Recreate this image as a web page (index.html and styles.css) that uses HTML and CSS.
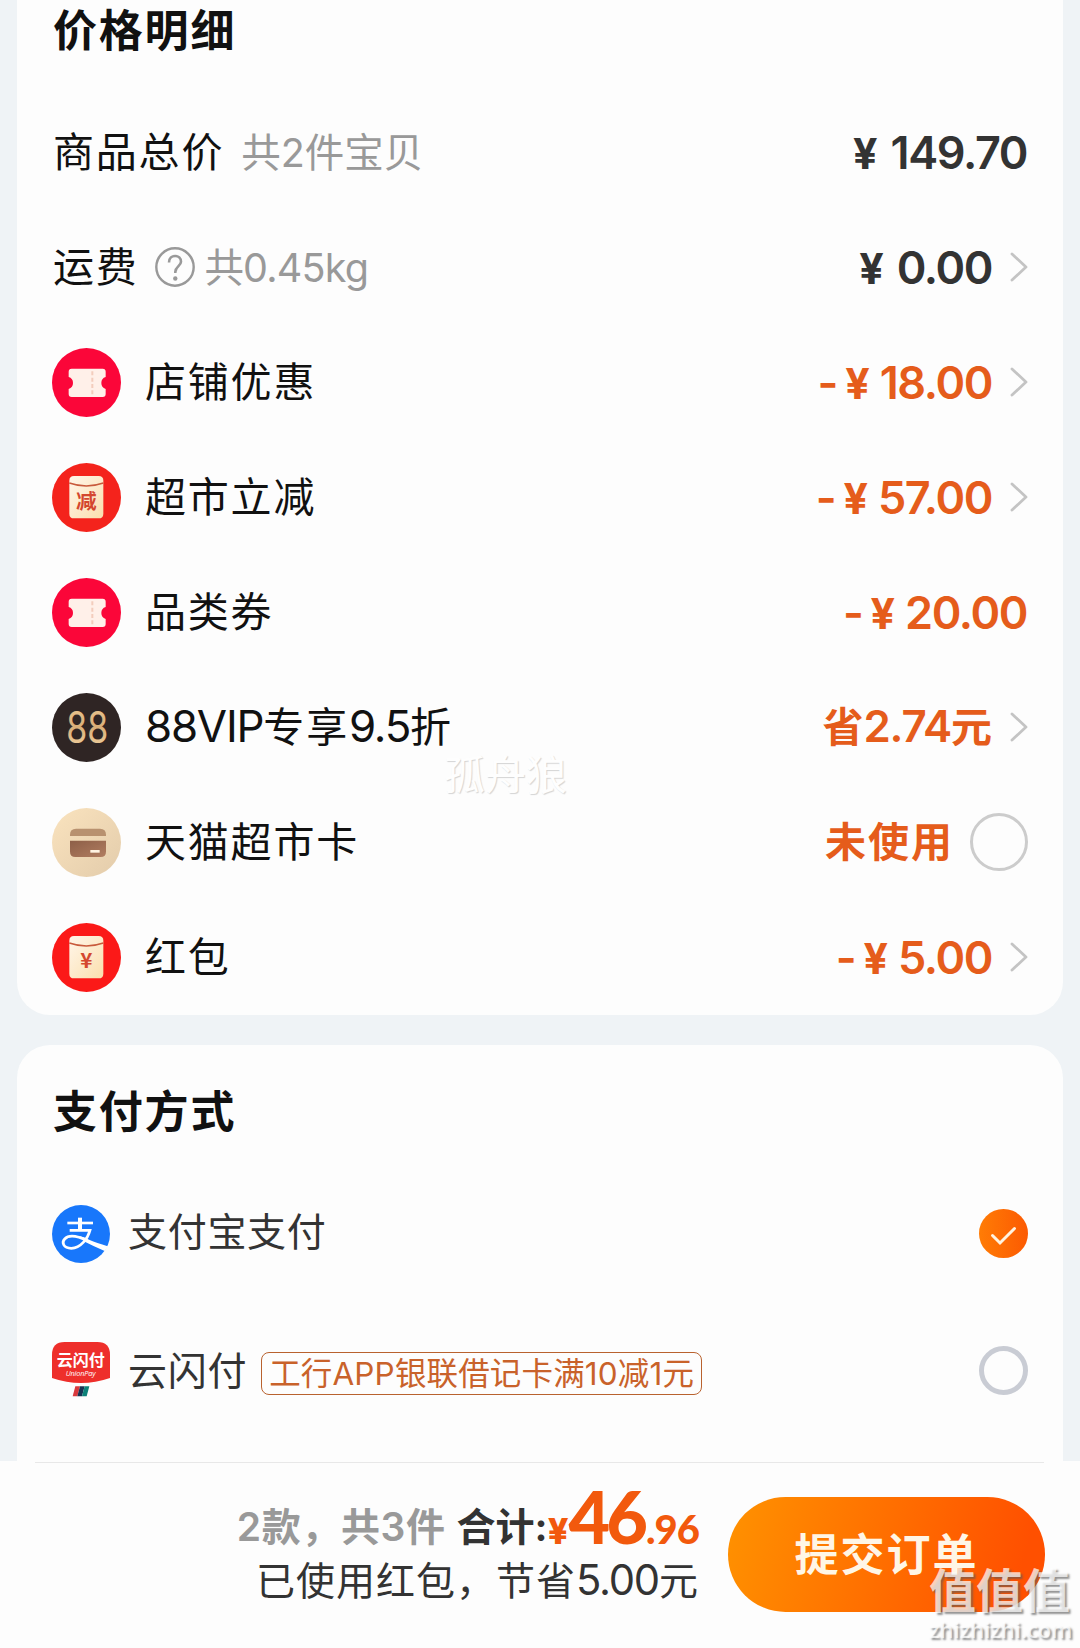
FILE: index.html
```html
<!DOCTYPE html>
<html lang="zh-CN">
<head>
<meta charset="utf-8">
<title>确认订单</title>
<link rel="stylesheet" href="styles.css">
</head>
<body>
<svg class="defs" width="0" height="0" aria-hidden="true">
  <defs>
    <linearGradient id="gold" x1="0" y1="0" x2="0" y2="1"><stop offset="0" stop-color="#eecb96"/><stop offset=".5" stop-color="#d9ae78"/><stop offset="1" stop-color="#f3d5a6"/></linearGradient>
    <linearGradient id="sand" x1="0" y1="0" x2="1" y2="1"><stop offset="0" stop-color="#fae3be"/><stop offset="1" stop-color="#e3ccab"/></linearGradient>
    <linearGradient id="cream" x1="0" y1="0" x2="1" y2="1"><stop offset="0" stop-color="#fff6ea"/><stop offset="1" stop-color="#fbdfae"/></linearGradient>
    <linearGradient id="brown" x1="0" y1="0" x2="1" y2="1"><stop offset="0" stop-color="#8d5f48"/><stop offset="1" stop-color="#b17d60"/></linearGradient>
    <symbol id="ticket" viewBox="0 0 207 207">
      <circle cx="103.500" cy="103.500" r="103.500" fill="#fb0639"/>
      <path d="M59 62H152q9 0 9 9V87q-13 4-13 18t13 18v15q0 9-9 9H59q-9 0-9-9v-15q13-4 13-18T50 87V71q0-9 9-9z" fill="#fff0e9"/>
      <path d="M121 70V142" stroke="#f3cdbd" stroke-width="6" stroke-dasharray="12 7"/>
    </symbol>
    <symbol id="pouch" viewBox="0 0 207 207">
      <path d="M66 39H140q14 0 14 14V152q0 14-14 14H66q-14 0-14-14V53q0-14 14-14z" fill="url(#cream)"/>
      <path d="M52 60Q103 78 154 60" fill="none" stroke="#c85a3c" stroke-width="5"/>
    </symbol>
    <symbol id="arrow" viewBox="0 0 18 30">
      <path d="M2 2L16 15L2 28" fill="none" stroke="#c4c4c4" stroke-width="2.800" stroke-linecap="round" stroke-linejoin="round"/>
    </symbol>
  </defs>
</svg>

<main class="page">
  <section class="card price">
    <h2 class="title">价格明细</h2>
    <div class="row plain">
      <span class="label">商品总价</span><span class="note note-count">共2件宝贝</span>
      <span class="amount dark"><span class="yen">¥</span>149.70</span>
    </div>
    <div class="row plain">
      <span class="label">运费</span>
      <svg class="help" viewBox="0 0 40 40"><circle cx="20" cy="20" r="18.700" fill="none" stroke="#999" stroke-width="2.400"/><path d="M14 15.500C14 11 17 9 20.200 9S26 11.200 26 14.800C26 19 20.300 19.500 20.300 25V26" fill="none" stroke="#999" stroke-width="2.600"/><circle cx="20.300" cy="31.500" r="2.200" fill="#999"/></svg>
      <span class="note">共<span class="weight">0.45kg</span></span>
      <span class="amount dark"><span class="yen">¥</span>0.00</span>
      <svg class="arrow"><use href="#arrow"/></svg>
    </div>
    <div class="row">
      <svg class="icon"><use href="#ticket"/></svg><span class="label">店铺优惠</span>
      <span class="amount"><span class="minus">-</span><span class="yen tight">¥</span>18.00</span>
      <svg class="arrow"><use href="#arrow"/></svg>
    </div>
    <div class="row">
      <svg class="icon" viewBox="0 0 207 207"><circle cx="103.500" cy="103.500" r="103.500" fill="#f4231c"/><use href="#pouch"/><text class="glyph" x="103" y="137" font-size="62" text-anchor="middle" fill="#d4472f">减</text></svg>
      <span class="label">超市立减</span>
      <span class="amount"><span class="minus">-</span><span class="yen tight">¥</span>57.00</span>
      <svg class="arrow"><use href="#arrow"/></svg>
    </div>
    <div class="row">
      <svg class="icon"><use href="#ticket"/></svg><span class="label">品类券</span>
      <span class="amount"><span class="minus">-</span><span class="yen tight">¥</span>20.00</span>
    </div>
    <div class="row">
      <svg class="icon" viewBox="0 0 207 207"><circle cx="103.500" cy="103.500" r="103.500" fill="#2f2524"/><text class="vip" x="43" y="150" font-size="130" textLength="126" lengthAdjust="spacingAndGlyphs" fill="url(#gold)">88</text></svg>
      <span class="label"><span class="latin">88VIP</span>专享<span class="latin">9.5</span>折</span>
      <span class="amount saved">省<span class="latin">2.74</span>元</span>
      <svg class="arrow"><use href="#arrow"/></svg>
    </div>
    <div class="row">
      <svg class="icon" viewBox="0 0 207 207"><circle cx="103.500" cy="103.500" r="103.500" fill="url(#sand)"/><path d="M54 84V80q0-18 18-18H144q18 0 18 18v4z" fill="#b8916f"/><path d="M54 98H162V131q0 16-16 16H70q-16 0-16-16z" fill="url(#brown)"/><rect x="115" y="126" width="28" height="8" fill="#fff3e2"/></svg>
      <span class="label">天猫超市卡</span>
      <span class="amount unused">未使用</span>
      <span class="circle"></span>
    </div>
    <div class="row">
      <svg class="icon" viewBox="0 0 207 207"><circle cx="103.500" cy="103.500" r="103.500" fill="#fb1918"/><use href="#pouch"/><text class="glyph" x="103" y="136" font-size="62" text-anchor="middle" fill="#d4472f">¥</text></svg>
      <span class="label">红包</span>
      <span class="amount"><span class="minus">-</span><span class="yen tight">¥</span>5.00</span>
      <svg class="arrow"><use href="#arrow"/></svg>
    </div>
    <span class="author-mark">孤舟狼</span>
  </section>

  <section class="card pay">
    <h2 class="title">支付方式</h2>
    <div class="pay-row">
      <svg class="pay-icon" viewBox="0 0 174 174"><circle cx="87" cy="87" r="87" fill="#1877fb"/><g fill="none" stroke="#fff" stroke-width="8"><path d="M46 54H123" /><path d="M84 38V76" stroke-width="12"/><path d="M53 76H114C107 101 86 130 58 130C34 129 28 113 38 102C50 89 77 93 106 107"/></g><path d="M80 92Q98 96 113 105Q133 113 167 124Q164 131 158 138Q125 124 100 111z" fill="#fff"/></svg>
      <span class="pay-label">支付宝支付</span>
      <svg class="radio" viewBox="0 0 49 49"><defs><linearGradient id="on" x1="0" y1="0" x2="1" y2="0"><stop offset="0" stop-color="#ff7c05"/><stop offset="1" stop-color="#fc5a02"/></linearGradient></defs><circle cx="24.500" cy="24.500" r="24.500" fill="url(#on)"/><path d="M13.500 26.500L21 34L35.500 19.500" fill="none" stroke="#fff3e0" stroke-width="3" stroke-linecap="round"/></svg>
    </div>
    <div class="pay-row">
      <svg class="pay-icon" viewBox="0 0 174 174"><path d="M0 38Q0 0 38 0H136Q174 0 174 38V108Q87 138 0 108z" fill="#ee2f2b"/><text class="glyph" x="86" y="71" font-size="48" text-anchor="middle" textLength="144" fill="#fff">云闪付</text><text class="union" x="86" y="101" font-size="22" text-anchor="middle" textLength="90" fill="#fff">UnionPay</text><path d="M70 133H84L76 163H62z" fill="#d8393d"/><path d="M84 133H98L90 163H76z" fill="#173354"/><path d="M98 133H112L104 163H90z" fill="#0c8178"/></svg>
      <span class="pay-label union-label">云闪付</span>
      <span class="tag">工行APP银联借记卡满10减1元</span>
      <span class="radio off"></span>
    </div>
  </section>
</main>

<footer class="bar">
  <div class="summary">
    <div class="total"><span class="count">2款，共3件</span><span class="sum">合计:</span><span class="cur">¥</span><span class="int">46</span><span class="dec">.96</span></div>
    <div class="saving">已使用红包，节省<span class="latin">5.00</span>元</div>
  </div>
  <button class="submit">提交订单</button>
</footer>
<div class="site-mark"><span class="site-name">值值值</span><span class="site-url">zhizhizhi.com</span></div>
</body>
</html>
```

FILE: styles.css
```css
* { box-sizing: border-box; }
body {
  margin: 0;
  height: 1648px;
  display: flex;
  flex-direction: column;
  overflow: hidden;
  position: relative;
  background: #eff3f6;
  color: #111;
  font-family: Inter, "Noto Sans CJK SC", sans-serif;
}
.defs { position: absolute; }
.page {
  height: 1461px;
  flex: none;
  padding: 0 17px;
  display: flex;
  flex-direction: column;
  gap: 30px;
}
.card { background: #fdfdfd; padding: 0 35px; position: relative; }
.price { height: 1015px; border-radius: 0 0 33px 33px; }
.pay { flex: 1; border-radius: 33px 33px 0 0; }
.title {
  margin: 0;
  font-size: 44px;
  font-weight: 700;
  letter-spacing: 1.8px;
  line-height: 62px;
}
.price .title { padding: 0 0 33px 1px; }
.pay .title { padding: 36px 0 22px 1px; }
.row { height: 115px; display: flex; align-items: center; white-space: nowrap; }
.plain { padding-left: 1px; }
.icon { width: 69px; height: 69px; margin-right: 24px; flex: none; }
.label { font-size: 41px; letter-spacing: 1.8px; padding-bottom: 8px; }
.latin { font-size: 1.07em; letter-spacing: -1.2px; }
.note { color: #999; font-size: 39.5px; letter-spacing: 0; padding-bottom: 7px; }
.note-count { margin-left: 17px; }
.weight { letter-spacing: -.8px; margin-left: -1px; }
.help { width: 40px; height: 40px; margin: 0 10px 2px 16px; }
.amount {
  margin-left: auto;
  padding-bottom: 1px;
  color: #e55c1b;
  font-size: 45px;
  font-weight: 600;
  letter-spacing: -1.4px;
}
.amount:last-child { margin-right: 1px; }
.dark { color: #333; }
.yen { font-size: 43px; font-weight: 700; margin-right: 13px; letter-spacing: 0; }
.tight { margin-right: 10px; }
.minus { margin-right: 8px; }
.saved, .unused { font-size: 41px; font-weight: 700; padding-bottom: 7px; }
.saved { letter-spacing: 0; }
.unused { letter-spacing: 2px; }
.saved .latin { font-weight: 600; }
.arrow { width: 18px; height: 30px; margin: 0 0 1px 18px; flex: none; }
.circle {
  width: 58px;
  height: 58px;
  margin: 0 0 1px 16px;
  border: 3px solid #ccc;
  border-radius: 50%;
}
.glyph { font-family: "Noto Sans CJK SC", sans-serif; font-weight: 700; }
.vip { font-family: Inter, sans-serif; font-weight: 400; }
.union { font-family: "Open Sans", sans-serif; font-style: italic; }
.pay-row { height: 137px; display: flex; align-items: center; white-space: nowrap; }
.pay-icon { width: 58px; height: 58px; margin-right: 18px; flex: none; }
.pay-label { font-size: 39px; letter-spacing: .7px; color: #333; padding-bottom: 9px; }
.union-label { padding-bottom: 6px; }
.tag {
  margin: 5px 0 0 14px;
  width: 441px;
  height: 43px;
  border: 1px solid #b9622f;
  border-radius: 8px;
  text-align: center;
  color: #c9622a;
  font-size: 31.5px;
  letter-spacing: .15px;
  line-height: 41px;
}
.radio { width: 49px; height: 49px; margin-left: auto; }
.off { border: 5px solid #c9ccd4; border-radius: 50%; }
.bar {
  height: 187px;
  background: #fdfdfd;
  display: flex;
  align-items: flex-start;
  justify-content: flex-end;
  margin: 0;
  padding: 0 35px;
}
.bar::before { content: ""; width: 1009px; height: 1px; background: #e8e8e8; margin: 1px -1009px 0 0; }
.summary { margin: 23px 29px 0 auto; text-align: right; white-space: nowrap; }
.total { height: 69px; line-height: 64px; font-size: 39px; font-weight: 700; display: flex; align-items: baseline; justify-content: flex-end; }
.count { color: #999; font-weight: 600; margin-right: 11px; letter-spacing: .6px; transform: translateY(-3px); }
.sum { color: #333; margin-right: -1px; transform: translateY(-3px); }
.cur, .int, .dec { color: #f2590d; font-weight: 900; }
.cur { font-size: 36px; width: 22px; font-weight: 800; }
.int { font-family: Lato, sans-serif; font-size: 72px; letter-spacing: -4px; }
.dec { font-family: Lato, sans-serif; font-size: 40px; letter-spacing: -1px; margin-left: 2px; }
.saving { color: #333; font-size: 39px; line-height: 54px; letter-spacing: 1px; }
.submit {
  width: 317px;
  height: 115px;
  margin-top: 36px;
  border: 0;
  padding: 0 0 6px;
  border-radius: 58px;
  background: linear-gradient(105deg, #ff9200, #ff5000 90%);
  color: #fff6e6;
  font: 700 44px "Noto Sans CJK SC", sans-serif;
  letter-spacing: 2px;
}
.author-mark {
  position: absolute;
  left: 427px;
  top: 746px;
  color: #fefefe;
  font-size: 41px;
  line-height: 58px;
  text-shadow: 1px 1px 1px #d4d4d4;
}
.site-mark {
  position: absolute;
  left: 929px;
  top: 1564px;
  width: 146px;
  display: flex;
  flex-direction: column;
  color: rgba(255, 255, 255, .72);
  text-shadow: 2px 2px 2px rgba(90, 90, 90, .65);
  white-space: nowrap;
}
.site-name { font-size: 47px; line-height: 54px; font-weight: 700; }
.site-url { font-family: "Open Sans", sans-serif; font-size: 22px; line-height: 22px; font-weight: 600; }
```
